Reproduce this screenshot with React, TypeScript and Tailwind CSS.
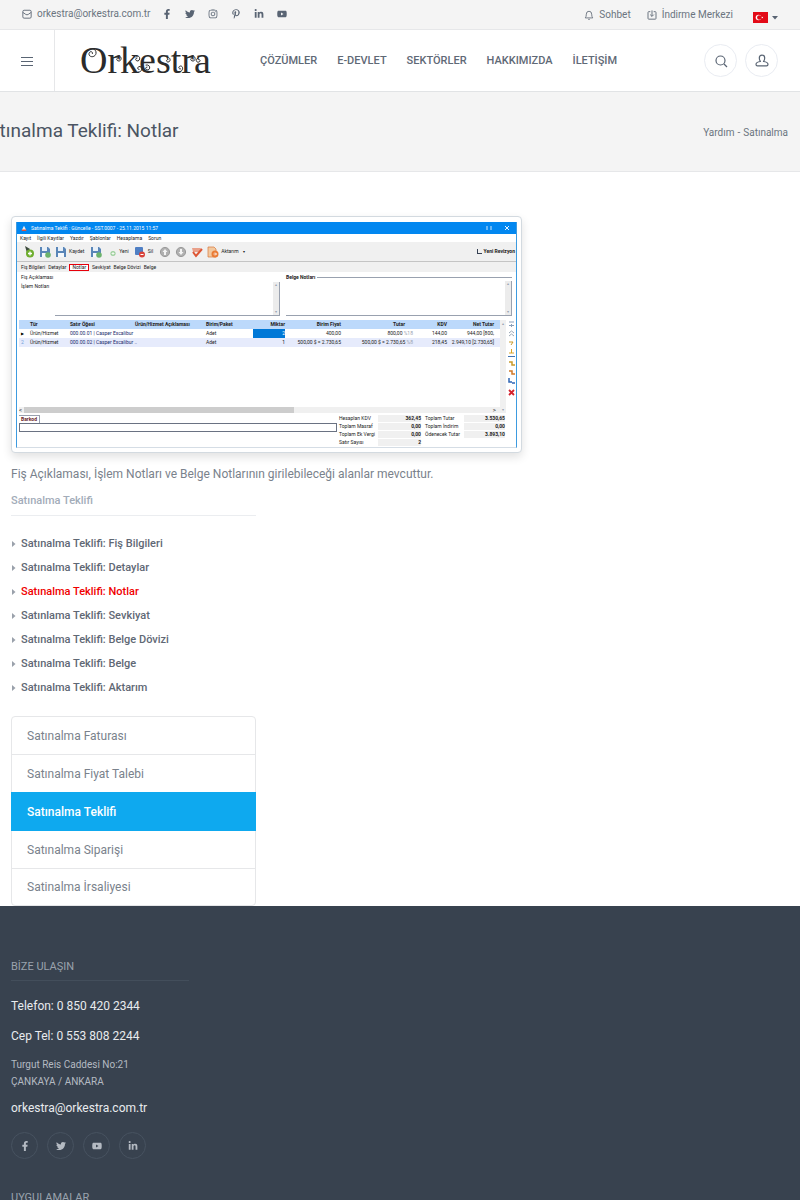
import React from 'react';
import { FaFacebookF, FaTwitter, FaInstagram, FaPinterestP, FaLinkedinIn, FaYoutube } from 'react-icons/fa';

const NAV = ['ÇÖZÜMLER', 'E-DEVLET', 'SEKTÖRLER', 'HAKKIMIZDA', 'İLETİŞİM'];

const TOPICS = [
  'Satınalma Teklifi: Fiş Bilgileri',
  'Satınalma Teklifi: Detaylar',
  'Satınalma Teklifi: Notlar',
  'Satınlama Teklifi: Sevkiyat',
  'Satınalma Teklifi: Belge Dövizi',
  'Satınalma Teklifi: Belge',
  'Satınalma Teklifi: Aktarım',
];

const DOCUMENTS = [
  'Satınalma Faturası',
  'Satınalma Fiyat Talebi',
  'Satınalma Teklifi',
  'Satınalma Siparişi',
  'Satinalma İrsaliyesi',
];

const TOP_SOCIAL = [
  { label: 'Facebook', Icon: FaFacebookF },
  { label: 'Twitter', Icon: FaTwitter },
  { label: 'Instagram', Icon: FaInstagram },
  { label: 'Pinterest', Icon: FaPinterestP },
  { label: 'LinkedIn', Icon: FaLinkedinIn },
  { label: 'YouTube', Icon: FaYoutube },
];

const FOOTER_SOCIAL = [
  { label: 'Facebook', Icon: FaFacebookF },
  { label: 'Twitter', Icon: FaTwitter },
  { label: 'YouTube', Icon: FaYoutube },
  { label: 'LinkedIn', Icon: FaLinkedinIn },
];

const Logo = () => (
  <svg viewBox="0 0 134 48" className="h-12 w-[134px]">
    <text x="0" y="36" fontSize="38" fill="#2b2b2b" fontFamily="'Liberation Serif', serif">Orkestra</text>
    {/* curls on the letter ends */}
    <g fill="none" stroke="#2b2b2b" strokeWidth="1" strokeLinecap="round">
      <path d="M5 17 C8 9 17 11 16 16.500 C15 21 8.500 20.500 9 16.500 C9.500 14 13 14 12.500 16.500" />
      <path d="M38 19 c4 -1 4 5 1 5 c-3 0 -3 -3.500 -0.500 -3" />
      <path d="M56 20 c4 -3 5 3 2 4 c-3 0 -3 -3 -1 -3" />
      <path d="M58 35 c4 1 5 -5 2 -5.500 c-3 0 -3 3 -1 3" />
      <path d="M66 28 c4 -1 5 4 2 5 c-3 0 -3 -3 -1 -3" />
      <path d="M87 20 c4 0 4 5 1 5 c-2 0 -2 -3 0 -2.500" />
      <path d="M99 35 c4 0 5 -6 1.500 -6 c-2.500 0.500 -2 3.500 0 3" />
      <path d="M112 19 c4 -1 4 5 1 5 c-3 0 -3 -3.500 -0.500 -3" />
      <path d="M118 21 c-3 1 -2 5 1 4 c2 -1 1 -3 -0.500 -2.500" />
    </g>
  </svg>
);

const MailIcon = () => (
  <svg viewBox="0 0 12 12" className="size-[10px]" fill="none" stroke="currentColor" strokeWidth="1.200">
    <rect x="1" y="1.500" width="10" height="9.500" rx="1.500" />
    <path d="M1 4 L4.500 6.500 Q6 7.500 7.500 6.500 L11 4" />
  </svg>
);

const BellIcon = () => (
  <svg viewBox="0 0 12 12" className="size-[10px]" fill="none" stroke="currentColor" strokeWidth="1.100" strokeLinejoin="round">
    <path d="M1.500 9.500 Q2.800 8 2.800 5 A3.200 3.500 0 0 1 9.200 5 Q9.200 8 10.500 9.500 Z" />
    <path d="M5 11 Q6 12 7 11" />
  </svg>
);

const DownloadIcon = () => (
  <svg viewBox="0 0 12 12" className="size-[10px]" fill="none" stroke="currentColor" strokeWidth="1.200">
    <path d="M4 2 H2 Q1.200 2 1.200 3 V10 Q1.200 11 2 11 H10 Q10.800 11 10.800 10 V3 Q10.800 2 10 2 H8" />
    <path d="M6 0.500 V7.500 M3.800 5.500 L6 7.700 L8.200 5.500" />
  </svg>
);

const FlagIcon = () => (
  <svg viewBox="0 0 15 11" className="h-[11px] w-[15px]">
    <rect width="15" height="11" fill="#e30a17" />
    <circle cx="5.500" cy="5.500" r="2.800" fill="#fff" />
    <circle cx="6.300" cy="5.500" r="2.200" fill="#e30a17" />
    <path d="M8.300 5.500 L10.200 4.800 L9.200 6.500 L9.200 4.500 L10.200 6.200 Z" fill="#fff" />
  </svg>
);

const SearchIcon = () => (
  <svg viewBox="0 0 14 14" className="size-[14px]" fill="none" stroke="currentColor" strokeWidth="1.200">
    <circle cx="6.500" cy="6.500" r="4.500" />
    <path d="M10 10 L13 13" />
  </svg>
);

const UserIcon = () => (
  <svg viewBox="0 0 14 14" className="size-[14px]" fill="none" stroke="currentColor" strokeWidth="1.200" strokeLinejoin="round">
    <path d="M5.500 7.500 Q4.300 6.500 4.300 4 A2.700 2.900 0 0 1 9.700 4 Q9.700 6.500 8.500 7.500 Q13 8.200 13 10.200 Q13 11.800 11.500 11.800 H2.500 Q1 11.800 1 10.200 Q1 8.200 5.500 7.500 Z" />
  </svg>
);

/* Toolbar glyphs of the application window */
const DiskIcon = ({ badge }: { badge?: boolean }) => (
  <svg viewBox="0 0 12 12" className="size-[12px]">
    <path d="M1 1 H9 L11 3 V11 H1 Z" fill="#5a86b8" />
    <rect x="3" y="1" width="5" height="4" fill="#e8f0f8" />
    <rect x="3" y="7" width="6" height="4" fill="#f6f9fc" />
    {badge && <circle cx="9" cy="9" r="2.800" fill="#6cb36c" />}
  </svg>
);

const RoundIcon = ({ down }: { down?: boolean }) => (
  <svg viewBox="0 0 12 12" className="size-[12px]">
    <circle cx="6" cy="6" r="4.600" fill="#b0b0b0" stroke="#9a9a9a" />
    <path d={down ? 'M6 9 L3.500 6 H5 V3 H7 V6 H8.500 Z' : 'M6 3 L8.500 6 H7 V9 H5 V6 H3.500 Z'} fill="#f4f4f4" />
  </svg>
);

const PlusIcon = ({ small }: { small?: boolean }) => (
  <svg viewBox="0 0 12 12" className="size-[12px]">
    {!small && <path d="M2 0 L7 3 L4 7 Z" fill="#3d4a3d" />}
    <circle cx="7" cy="7.500" r={small ? 2.6 : 4} fill={small ? '#9ccf9c' : '#6fae2f'} />
    <path d={small ? 'M7 6 V9 M5.500 7.500 H8.500' : 'M7 5.500 V9.500 M5 7.500 H9'} stroke="#fff" strokeWidth={small ? 0.8 : 1.3} />
  </svg>
);

const DeleteIcon = () => (
  <svg viewBox="0 0 12 12" className="size-[12px]">
    <rect x="1" y="1" width="8" height="8" rx="1" fill="#4f7fc4" />
    <circle cx="8" cy="8.500" r="3" fill="#d9433b" />
    <path d="M6.500 8.500 H9.500" stroke="#fff" />
  </svg>
);

const CheckIcon = () => (
  <svg viewBox="0 0 12 12" className="size-[12px]">
    <path d="M1 2 H10 L8 6 H2 Z" fill="#e9a08a" />
    <path d="M2 6 L5 10 L11 3" fill="none" stroke="#dd5533" strokeWidth="2" />
  </svg>
);

const TransferIcon = () => (
  <svg viewBox="0 0 12 12" className="size-[12px]">
    <path d="M1 1 H7 L9 3 V11 H1 Z" fill="#f2c9a0" stroke="#d9773a" strokeWidth="0.700" />
    <circle cx="8" cy="8" r="3.500" fill="#ea7b35" />
    <path d="M6.500 8 H9.500 M8 6.500 L9.500 8 L8 9.500" stroke="#fff" strokeWidth="0.800" fill="none" />
  </svg>
);

const SideIcons = () => (
  <svg viewBox="0 0 10 80" className="h-[80px] w-[10px]" fill="none" strokeWidth="1">
    <path d="M3 2 H8 M5.500 4 V7 M3 5.500 H8" stroke="#8aa0bb" />
    <path d="M3 13 L5.500 11 L8 13 M3 16 L5.500 14 L8 16" stroke="#9aa7b5" />
    <path d="M3 22 H7 L5 25" stroke="#c69a2d" />
    <path d="M5.500 29 V33 M3 33 H8" stroke="#d9a528" />
    <path d="M2 36.500 H9" stroke="#3f74b5" />
    <path d="M3 42 H6 V45 H9" stroke="#c69a2d" strokeWidth="1.500" />
    <path d="M3 51 H6 V54 H9" stroke="#d07a2a" strokeWidth="1.500" />
    <path d="M3 58 V62 H6 M6 63 H9" stroke="#2f66b5" strokeWidth="1.500" />
    <path d="M3 70 L8 75 M8 70 L3 75" stroke="#d3232e" strokeWidth="1.800" />
  </svg>
);

const TOTALS = [
  ['Hesaplan KDV', '362,45', 'Toplam Tutar', '3.530,65'],
  ['Toplam Masraf', '0,00', 'Toplam İndirim', '0,00'],
  ['Toplam Ek Vergi', '0,00', 'Ödenecek Tutar', '3.893,10'],
  ['Satır Sayısı', '2', '', ''],
];

const NoteScroll = () => (
  <div className="flex w-[7px] shrink-0 flex-col items-center justify-between border-r border-gray-400 bg-[#ececec] text-[4px] leading-[6px] text-gray-400">
    <span>▴</span>
    <span>▾</span>
  </div>
);

const AppWindow = () => (
  <div className="flex flex-col border-x border-b border-x-[#3d9be0] border-b-[#d5dde5] bg-white text-[5px] leading-[7px] whitespace-nowrap text-[#222]">
    <div className="flex h-3 items-center gap-1 bg-[#0287f0] px-1 text-white">
      <svg viewBox="0 0 8 8" className="size-[6px]">
        <path d="M1 7 L4 1 L7 7 Z" fill="#f0f0f0" />
        <path d="M1 7 H7" stroke="#e0523a" strokeWidth="2" />
      </svg>
      <span className="flex-1">Satınalma Teklifi : Güncelle - SST.0007 - 25.11.2015 11:57</span>
      <svg viewBox="0 0 6 6" className="mr-2 size-[6px]"><path d="M1 1 V5 M5 1 V5" stroke="#cfe6fb" /></svg>
      <svg viewBox="0 0 6 6" className="mr-[2px] size-[6px]"><path d="M1 1 L5 5 M5 1 L1 5" stroke="#e8f3fd" /></svg>
    </div>
    <div className="flex h-2 items-center gap-[6px] px-[3px]">
      <span>Kayıt</span>
      <span>İlgili Kayıtlar</span>
      <span>Yazdır</span>
      <span>Şablonlar</span>
      <span>Hesaplama</span>
      <span>Sorun</span>
    </div>
    <div className="flex h-5 items-center border-b border-[#c4c4c4] bg-[#f0f0f0] pr-px pl-1.5">
      <div className="flex flex-1 items-center gap-1">
        <PlusIcon />
        <DiskIcon badge />
        <span className="flex items-center gap-[2px]"><DiskIcon />Kaydet</span>
        <span className="pl-[2px]"><DiskIcon badge /></span>
        <span className="flex items-center gap-px"><PlusIcon small />Yeni</span>
        <span className="flex items-center gap-[2px] pl-px"><DeleteIcon />Sil</span>
        <span className="pl-[2px]"><RoundIcon /></span>
        <RoundIcon down />
        <CheckIcon />
        <span className="flex items-center gap-[2px]"><TransferIcon />Aktarım</span>
        <span className="text-[4px]">▾</span>
      </div>
      <label className="flex items-center gap-[2px] font-bold">
        <input type="checkbox" className="size-[5px] appearance-none border-b border-l border-gray-700" />
        Yeni Revizyon
      </label>
    </div>
    <div className="flex h-[10px] items-center gap-[3px] bg-[#f0f0f0] px-1">
      <span>Fiş Bilgileri</span>
      <span>Detaylar</span>
      <span className="bg-white px-[3px] ring-1 ring-red-600 ring-inset">Notlar</span>
      <span>Sevkiyat</span>
      <span>Belge Dövizi</span>
      <span>Belge</span>
    </div>
    <div className="flex h-12 gap-[6px] px-1 pt-[2px] pb-1">
      <div className="flex w-[259px] shrink-0">
        <div className="flex w-[34px] flex-col gap-[2px]">
          <label htmlFor="fis">Fiş Açıklaması</label>
          <label htmlFor="islem">İşlem Notları</label>
        </div>
        <textarea id="islem" className="mt-2 min-w-0 flex-1 resize-none border-b border-gray-400" />
        <div className="mt-2 flex border-b border-gray-400"><NoteScroll /></div>
      </div>
      <div className="flex min-w-0 flex-1 flex-col">
        <label htmlFor="belge" className="flex items-center gap-[2px] font-bold after:h-px after:flex-1 after:bg-gray-400">
          Belge Notları
        </label>
        <div className="flex flex-1 border-b border-gray-400">
          <textarea id="belge" className="h-full min-w-0 flex-1 resize-none" />
          <NoteScroll />
        </div>
      </div>
    </div>
    <div className="flex h-[93px]">
      <div className="flex min-w-0 flex-1 flex-col justify-between pl-[2px]">
        <table className="w-full table-fixed border-collapse text-left">
          <colgroup>
            <col className="w-[11px]" />
            <col className="w-[40px]" />
            <col className="w-[65px]" />
            <col className="w-[71px]" />
            <col className="w-[47px]" />
            <col className="w-[32px]" />
            <col className="w-[56px]" />
            <col className="w-[76px]" />
            <col className="w-[30px]" />
            <col />
          </colgroup>
          <thead>
            <tr className="h-[9px] bg-[#bcd9fb]">
              <th />
              <th>Tür</th>
              <th>Satır Öğesi</th>
              <th>Ürün/Hizmet Açıklaması</th>
              <th>Birim/Paket</th>
              <th className="text-right">Miktar</th>
              <th className="text-right">Birim Fiyat</th>
              <th className="pr-3 text-right">Tutar</th>
              <th className="text-right">KDV</th>
              <th className="pr-[6px] text-right">Net Tutar</th>
            </tr>
          </thead>
          <tbody>
            <tr className="h-[9px]">
              <td className="pl-[2px] text-[4px] text-black">▶</td>
              <td>Ürün/Hizmet</td>
              <td className="text-[#1a2a6c]">000.00.01 | Casper Excalibur</td>
              <td />
              <td>Adet</td>
              <td className="bg-[#0078d7] text-right text-white">2</td>
              <td className="text-right">400,00</td>
              <td className="pr-1 text-right">800,00 <span className="text-gray-400">%18</span></td>
              <td className="text-right">144,00</td>
              <td className="pr-[6px] text-right">944,00 [800,</td>
            </tr>
            <tr className="h-[9px] bg-[#e6ebfc]">
              <td className="pl-[2px] text-[#6fa0d8]">2</td>
              <td>Ürün/Hizmet</td>
              <td className="text-[#1a2a6c]">000.00.02 | Casper Excalibur ..</td>
              <td />
              <td>Adet</td>
              <td className="text-right">1</td>
              <td className="text-right">500,00 $ = 2.730,65</td>
              <td className="pr-1 text-right">500,00 $ = 2.730,65 <span className="text-gray-400">%8</span></td>
              <td className="text-right">218,45</td>
              <td className="pr-[6px] text-right">2.949,10 [2.730,65]</td>
            </tr>
          </tbody>
        </table>
        <div className="flex h-[6px] items-center gap-[2px] bg-[#f0f0f0] text-[6px] leading-[6px]">
          <span>&lt;</span>
          <div className="h-full w-[270px] bg-[#cdcdcd]" />
          <span className="flex-1 pr-1 text-right">&gt;</span>
        </div>
      </div>
      <div className="flex w-[6px] flex-col items-center justify-between bg-[#f0f0f0] text-[4px] text-gray-400">
        <span>▴</span>
        <span>▾</span>
      </div>
      <SideIcons />
    </div>
    <div className="flex h-[34px] justify-between pt-[2px] pr-[11px] pl-[2px]">
      <div className="flex w-[318px] flex-col items-start">
        <label htmlFor="barkod" className="border-t border-r border-gray-400 px-[2px] font-bold text-[#6b1f2a]">Barkod</label>
        <input id="barkod" className="h-[9px] w-full border border-gray-500" />
      </div>
      <div className="grid grid-cols-[37px_43px_39px_41px] content-start gap-x-[2px]">
        {TOTALS.map(([a, b, c, d]) => (
          <React.Fragment key={a}>
            <span>{a}</span>
            <span className="border-b border-white bg-[#f0f0f0] text-right font-bold">{b}</span>
            <span className="pl-[2px]">{c}</span>
            <span className={d ? 'border-b border-white bg-[#f0f0f0] text-right font-bold' : ''}>{d}</span>
          </React.Fragment>
        ))}
      </div>
    </div>
  </div>
);

export default function App() {
  return (
    <div className="min-h-screen overflow-hidden bg-white font-['Roboto',sans-serif] text-[#6b7480]">
      <div className="flex h-[30px] items-center justify-between border-b border-[#e6e7e9] bg-[#f4f4f4] px-[22px] text-[10px]">
        <div className="flex items-center pb-[2px]">
          <a href="mailto:orkestra@orkestra.com.tr" className="flex w-[140px] items-center gap-[5px] whitespace-nowrap">
            <MailIcon />
            orkestra@orkestra.com.tr
          </a>
          <div className="flex gap-[13px] text-[#596473]">
            {TOP_SOCIAL.map(({ label, Icon }) => (
              <a key={label} href="#" aria-label={label}><Icon className="size-[10px]" /></a>
            ))}
          </div>
        </div>
        <div className="flex items-center">
          <a href="#" className="flex items-center gap-[5px] pr-4"><BellIcon />Sohbet</a>
          <a href="#" className="flex items-center gap-[5px] pr-5"><DownloadIcon />İndirme Merkezi</a>
          <button aria-label="Dil" className="flex items-center gap-1 pt-1.5">
            <FlagIcon />
            <svg viewBox="0 0 6 4" className="h-1 w-1.5"><path d="M0 0 H6 L3 3.500 Z" fill="#596473" /></svg>
          </button>
        </div>
      </div>

      <header className="flex h-[62px] items-center border-b border-[#e1e3e5] pr-[22px]">
        <div className="flex h-full w-[55px] items-center justify-center border-r border-[#e6e7e9]">
          <button aria-label="Menü" className="flex flex-col gap-[3px] pt-[2px]">
            <span className="h-px w-3 bg-[#596473]" />
            <span className="h-px w-3 bg-[#596473]" />
            <span className="h-px w-3 bg-[#596473]" />
          </button>
        </div>
        <a href="#" className="ml-[25px]"><Logo /></a>
        <nav className="ml-[46px] flex flex-1 gap-5 pt-[2px] text-[11px] font-medium text-[#5f6976]">
          {NAV.map((item) => (
            <a key={item} href="#">{item}</a>
          ))}
        </nav>
        <div className="flex gap-2 text-[#596473]">
          <button aria-label="Ara" className="flex size-[33px] items-center justify-center rounded-full border border-[#e9ecf2]"><SearchIcon /></button>
          <button aria-label="Hesap" className="flex size-[33px] items-center justify-center rounded-full border border-[#e9ecf2]"><UserIcon /></button>
        </div>
      </header>

      <div className="flex h-20 items-center justify-between border-b border-[#e6e7e9] bg-[#f4f4f4] pr-3">
        <h1 className="-ml-[22px] text-[19px] text-[#4b5563]">Satınalma Teklifi: Notlar</h1>
        <div className="flex gap-[3px] pt-[2px] text-[10px]">
          <a href="#">Yardım</a>
          <span>-</span>
          <a href="#">Satınalma</a>
        </div>
      </div>

      <main className="px-[11px] pt-11">
        <figure className="max-w-[511px] rounded border border-[#d3dae0] bg-white p-1 pt-[5px] shadow-[0_4px_10px_rgba(0,0,0,0.12)]">
          <AppWindow />
        </figure>
        <p className="mt-3 text-[12px] leading-[18px] text-[#7a828c]">
          Fiş Açıklaması, İşlem Notları ve Belge Notlarının girilebileceği alanlar mevcuttur.
        </p>
        <aside className="w-full max-w-[245px]">
          <h2 className="mt-[10px] border-b border-[#ebedf0] pb-1.5 text-[11px] leading-4 font-medium text-[#a3acb9]">Satınalma Teklifi</h2>
          <ul className="mt-4 text-[11px] leading-6 font-medium text-[#5f6875]">
            {TOPICS.map((topic) => (
              <li key={topic} className="flex items-center gap-[5px]">
                <svg viewBox="0 0 4 6" className="ml-px h-1.5 w-1"><path d="M0 0 L3.500 3 L0 6 Z" fill="#9aa1ab" /></svg>
                <a href="#" className={topic.endsWith('Notlar') ? 'text-[#f00000]' : ''}>{topic}</a>
              </li>
            ))}
          </ul>
          <ul className="mt-4 rounded border border-[#e6e7e9] text-[12px] text-[#7a828c]">
            {DOCUMENTS.map((doc) => (
              <li key={doc} className="group">
                <a
                  href="#"
                  className={
                    doc === 'Satınalma Teklifi'
                      ? '-mx-px -mt-px flex h-[39px] items-center bg-[#0ea9ef] px-4 font-medium text-white'
                      : 'flex h-[38px] items-center border-b border-[#e6e7e9] px-[15px] group-last:h-9 group-last:border-b-0'
                  }
                >
                  {doc}
                </a>
              </li>
            ))}
          </ul>
        </aside>
      </main>

      <footer className="bg-[#38424f] px-[11px] pt-[53px] text-[#9aa2ad]">
        <section className="w-[178px]">
          <h3 className="border-b border-[#434e5b] pb-[5px] text-[11px] leading-4">BİZE ULAŞIN</h3>
          <p className="mt-4 text-[12px] leading-[18px] text-[#e8ebee]">Telefon: 0 850 420 2344</p>
          <p className="mt-3 text-[12px] leading-[18px] text-[#e8ebee]">Cep Tel: 0 553 808 2244</p>
          <address className="mt-[11px] text-[10px] leading-[17px] text-[#b4bac2] not-italic">
            Turgut Reis Caddesi No:21<br />
            ÇANKAYA / ANKARA
          </address>
          <a href="mailto:orkestra@orkestra.com.tr" className="mt-[9px] block text-[12px] leading-[18px] text-[#e8ebee]">orkestra@orkestra.com.tr</a>
          <div className="mt-[15px] flex gap-[9px] text-[#b4bac2]">
            {FOOTER_SOCIAL.map(({ label, Icon }) => (
              <a key={label} href="#" aria-label={label} className="flex size-[27px] items-center justify-center rounded-full border border-[#475260]">
                <Icon className="size-[10px]" />
              </a>
            ))}
          </div>
        </section>
        <h3 className="mt-[31px] text-[11px] leading-4">UYGULAMALAR</h3>
      </footer>
    </div>
  );
}
